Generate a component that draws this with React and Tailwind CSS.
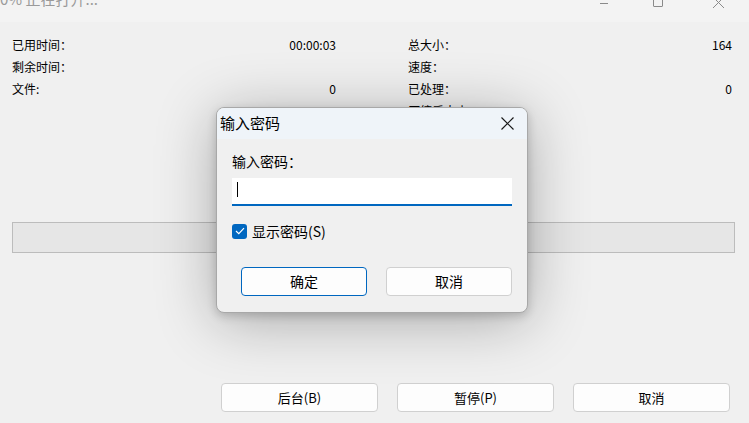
import React from "react";

const font = { fontFamily: '"Noto Sans CJK SC", "Noto Sans", sans-serif' };

function Row({ l1, v1, l2, v2 }) {
  return (
    <div className="flex h-[22px] items-center text-[12px] text-black">
      <div className="flex w-[324px] justify-between">
        <span>{l1}</span>
        <span>{v1}</span>
      </div>
      <div className="ml-[72px] flex w-[324px] justify-between">
        <span>{l2}</span>
        <span>{v2}</span>
      </div>
    </div>
  );
}

export default function App() {
  return (
    <div
      className="relative h-[423px] w-[749px] overflow-hidden bg-[#f0f0f0]"
      style={font}
    >
      {/* title bar */}
      <div className="relative flex h-[22px] bg-[#f3f3f3]">
        <span className="mt-[-11px] text-[15px] leading-[20px] text-[#9a9a9a]">
          0% 正在打开...
        </span>
        <div className="absolute left-[600px] top-[3px] h-px w-[8px] bg-[#8a8a8a]" />
        <div className="absolute left-[653px] top-[-4px] h-[11px] w-[10px] rounded-[1px] border border-[#8a8a8a]" />
        <svg className="absolute left-[712px] top-[-3px]" width="13" height="12" viewBox="0 0 13 12">
          <path d="M1 0 L12 11 M12 0 L1 11" stroke="#8a8a8a" strokeWidth="1" fill="none" />
        </svg>
      </div>

      {/* info rows */}
      <div className="ml-[12px] mt-[12px] flex flex-col">
        <Row l1="已用时间：" v1="00:00:03" l2="总大小：" v2="164" />
        <Row l1="剩余时间：" v1="" l2="速度：" v2="" />
        <Row l1="文件:" v1="0" l2="已处理：" v2="0" />
        <Row l1="" v1="" l2="压缩后大小：" v2="" />
      </div>

      {/* progress bar */}
      <div className="ml-[12px] mt-[100px] h-[31px] w-[723px] border border-[#bcbcbc] bg-[#e6e6e6]" />

      {/* bottom buttons */}
      <div className="mt-[130px] flex justify-end gap-[19px] pr-[19px]">
        {["后台(B)", "暂停(P)", "取消"].map((t) => (
          <button
            key={t}
            className="flex h-[29px] w-[157px] items-center justify-center rounded-[4px] border border-[#d0d0d0] bg-[#fdfdfd] text-[13px] text-black"
          >
            {t}
          </button>
        ))}
      </div>

      {/* dialog */}
      <div className="absolute left-[216px] top-[107px] flex h-[206px] w-[312px] flex-col overflow-hidden rounded-[8px] border border-[#a8a8a8] bg-[#f0f0f0] shadow-[0_8px_60px_rgba(0,0,0,0.3),0_3px_10px_rgba(0,0,0,0.18)]">
        <div className="relative flex h-[31px] items-center bg-[#eff4f9] pl-[3px]">
          <span className="text-[15px] text-black">输入密码</span>
          <svg className="absolute left-[284px] top-[9px]" width="13" height="13" viewBox="0 0 13 13">
            <path d="M0.5 0.5 L12.5 12.5 M12.5 0.5 L0.5 12.5" stroke="#1a1a1a" strokeWidth="1.2" fill="none" />
          </svg>
        </div>
        <div className="flex flex-col px-[15px]">
          <div className="mt-[12px] h-[20px] text-[14px] leading-[20px] text-black">输入密码：</div>
          <div className="relative mt-[7px] h-[28px] w-[280px] border-b-2 border-[#0067c0] bg-white">
            <div className="absolute left-[5px] top-[4px] h-[15px] w-px bg-black" />
          </div>
          <div className="mt-[15px] flex h-[20px] items-center">
            <div className="flex h-[15px] w-[15px] items-center justify-center rounded-[3px] bg-[#0067c0]">
              <svg width="10" height="8" viewBox="0 0 10 8">
                <path d="M1 4 L3.8 6.6 L9 1.2" stroke="white" strokeWidth="1.2" fill="none" />
              </svg>
            </div>
            <span className="ml-[5px] text-[14px] leading-[20px] text-black">显示密码(S)</span>
          </div>
          <div className="mt-[26px] flex gap-[19px] pl-[9px]">
            <button className="flex h-[29px] w-[126px] items-center justify-center rounded-[4px] border border-[#0067c0] bg-[#fdfdfd] text-[14px] text-black">
              确定
            </button>
            <button className="flex h-[29px] w-[126px] items-center justify-center rounded-[4px] border border-[#d0d0d0] bg-[#fdfdfd] text-[14px] text-black">
              取消
            </button>
          </div>
        </div>
      </div>
    </div>
  );
}
